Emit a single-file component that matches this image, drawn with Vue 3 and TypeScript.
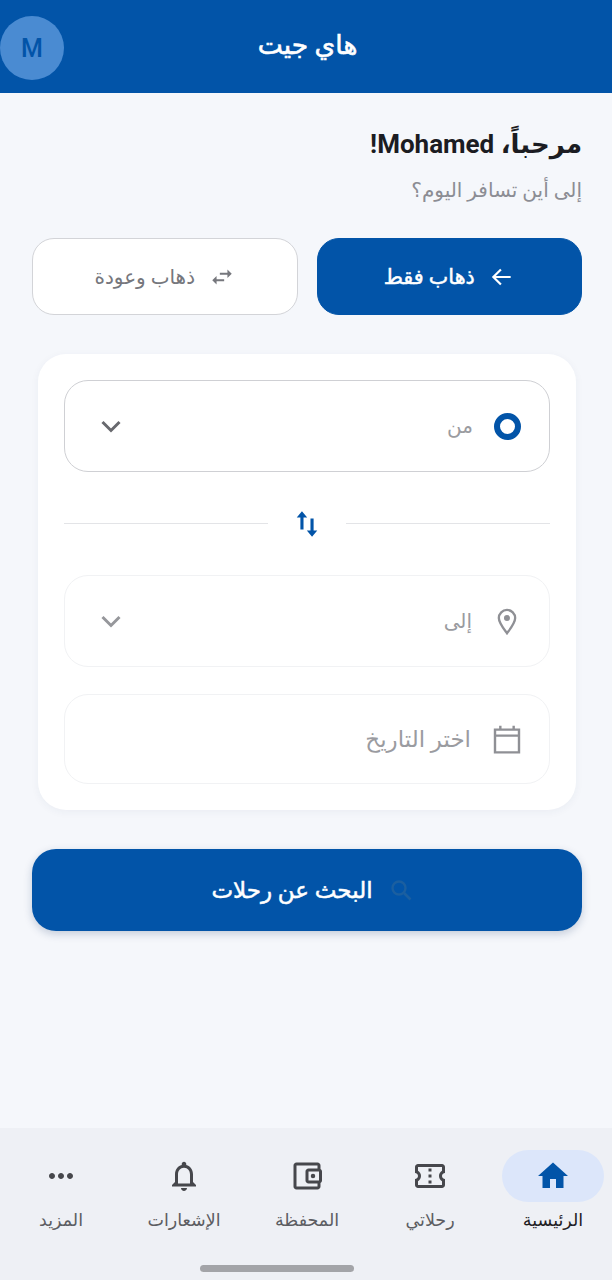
<script setup lang="ts">
interface NavItem { label: string; active?: boolean; icon: string }
const nav: NavItem[] = [
  { label: 'الرئيسية', active: true, icon: 'M10 20v-6h4v6h5v-8h3L12 3 2 12h3v8z' },
  { label: 'رحلاتي', icon: 'M22 10V6c0-1.1-.9-2-2-2H4c-1.1 0-2 .9-2 2v4c1.1 0 2 .9 2 2s-.9 2-2 2v4c0 1.1.9 2 2 2h16c1.1 0 2-.9 2-2v-4c-1.1 0-2-.9-2-2s.9-2 2-2zm-2-1.46c-1.19.69-2 1.99-2 3.46s.81 2.77 2 3.46V18H4v-2.54c1.19-.69 2-1.99 2-3.46 0-1.48-.8-2.77-2-3.46V6h16v2.54zM11 15h2v2h-2zm0-4h2v2h-2zm0-4h2v2h-2z' },
  { label: 'المحفظة', icon: 'M21 7.28V5c0-1.1-.9-2-2-2H5c-1.11 0-2 .9-2 2v14c0 1.1.89 2 2 2h14c1.1 0 2-.9 2-2v-2.28c.59-.35 1-.98 1-1.72V9c0-.74-.41-1.38-1-1.72zM20 9v6h-7V9h7zM5 19V5h14v2h-6c-1.1 0-2 .9-2 2v6c0 1.1.9 2 2 2h6v2H5z M16 13.5a1.5 1.5 0 1 0 0-3 1.5 1.5 0 0 0 0 3z' },
  { label: 'الإشعارات', icon: 'M12 22c1.1 0 2-.9 2-2h-4c0 1.1.9 2 2 2zm6-6v-5c0-3.07-1.63-5.64-4.5-6.32V4c0-.83-.67-1.5-1.5-1.5s-1.5.67-1.5 1.5v.68C7.64 5.36 6 7.92 6 11v5l-2 2v1h16v-1l-2-2zm-2 1H8v-6c0-2.48 1.51-4.5 4-4.5s4 2.02 4 4.5v6z' },
  { label: 'المزيد', icon: 'M6 10c-1.1 0-2 .9-2 2s.9 2 2 2 2-.9 2-2-.9-2-2-2zm12 0c-1.1 0-2 .9-2 2s.9 2 2 2 2-.9 2-2-.9-2-2-2zm-6 0c-1.1 0-2 .9-2 2s.9 2 2 2 2-.9 2-2-.9-2-2-2z' },
]
</script>

<template>
  <div class="page" dir="rtl">
    <header class="topbar">
      <h1 class="title">هاي جيت</h1>
      <div class="avatar">M</div>
    </header>

    <main class="content">
      <h2 class="greet">مرحباً، Mohamed!</h2>
      <p class="sub">إلى أين تسافر اليوم؟</p>

      <div class="trip">
        <button class="trip-btn on">
          <svg class="trip-icon" viewBox="0 0 24 24"><path d="M20 12H4.500M11 5l-7 7 7 7" fill="none" stroke="currentColor" stroke-width="2" /></svg>
          <span>ذهاب فقط</span>
        </button>
        <button class="trip-btn">
          <svg class="trip-icon" viewBox="0 0 24 24"><path fill="currentColor" d="M6.990 11 3 15l3.990 4v-3H14v-2H6.990v-3zM21 9l-3.990-4v3H10v2h7.010v3L21 9z" /></svg>
          <span>ذهاب وعودة</span>
        </button>
      </div>

      <section class="card">
        <div class="field first">
          <span class="ring"></span>
          <span class="ph">من</span>
          <svg class="chev" viewBox="0 0 24 24"><path d="M3.500 8l8.500 8.500L20.500 8" fill="none" stroke="currentColor" stroke-width="3" /></svg>
        </div>

        <div class="swap-row">
          <span class="line"></span>
          <svg class="swap" viewBox="0 0 24 30"><path fill="currentColor" d="M6.500 1 0.800 8h4v13h3.400V8h4zM17.500 29l5.700-7h-4V9h-3.400v13h-4z" /></svg>
          <span class="line"></span>
        </div>

        <div class="field second">
          <svg class="fic" viewBox="0 0 24 24"><path fill="none" stroke="currentColor" stroke-width="2" d="M12 22.500c-3-4-7-8.800-7-13a7 7 0 0 1 14 0c0 4.200-4 9-7 13z" /><circle cx="12" cy="9.500" r="2.600" fill="currentColor" /></svg>
          <span class="ph">إلى</span>
          <svg class="chev light" viewBox="0 0 24 24"><path d="M3.500 8l8.500 8.500L20.500 8" fill="none" stroke="currentColor" stroke-width="3" /></svg>
        </div>

        <div class="field third">
          <svg class="fic cal" viewBox="0 0 24 24"><path fill="none" stroke="currentColor" stroke-width="1.800" d="M3 5h18v17H3zM3 9.500h18M7 2v3M17 2v3" /></svg>
          <span class="ph wide">اختر التاريخ</span>
        </div>
      </section>

      <button class="search">
        <svg class="search-ic" viewBox="0 0 24 24"><circle cx="10" cy="10" r="6.500" fill="none" stroke="currentColor" stroke-width="2.400" /><path d="M15 15l6.500 6.500" stroke="currentColor" stroke-width="2.600" /></svg>
        <span>البحث عن رحلات</span>
      </button>
    </main>

    <nav class="nav">
      <div v-for="item in nav" :key="item.label" class="nav-item" :class="{ active: item.active }">
        <span class="nav-ic"><svg viewBox="0 0 24 24"><path fill="currentColor" fill-rule="evenodd" :d="item.icon" /></svg></span>
        <span class="nav-label">{{ item.label }}</span>
      </div>
      <span class="handle"></span>
    </nav>
  </div>
</template>

<style>
body { margin: 0; background: #f5f7fb; }
</style>

<style scoped>
.page {
  width: 612px;
  height: 1280px;
  display: flex;
  flex-direction: column;
  background: #f5f7fb;
  font-family: Roboto, "DejaVu Sans", sans-serif;
  overflow: hidden;
}
.topbar {
  height: 93px;
  flex: none;
  background: #0254a8;
  position: relative;
  display: flex;
  align-items: center;
  justify-content: center;
  padding-left: 3px;
  box-sizing: border-box;
}
.title {
  margin: 0 0 4px;
  color: #fff;
  font-size: 26.500px;
  font-weight: 400;
  -webkit-text-stroke: 0.6px #fff;
}
.avatar {
  position: absolute;
  left: 0;
  top: 16px;
  width: 64px;
  height: 64px;
  border-radius: 50%;
  background: #4a8bd2;
  color: #0254a8;
  font-size: 25px;
  font-weight: 500;
  display: flex;
  align-items: center;
  justify-content: center;
}
.content {
  flex: 1;
  padding: 30px 30px 0 30px;
  display: flex;
  flex-direction: column;
}
.greet {
  margin: 0;
  color: #1b1c22;
  font-size: 26px;
  line-height: 42px;
  font-weight: 700;
}
.sub {
  margin: 8px 0 0;
  color: #8c8d94;
  font-size: 20px;
  line-height: 34px;
}
.trip {
  margin-top: 31px;
  margin-left: 2px;
  display: flex;
  gap: 19px;
}
.trip-btn {
  flex: 1;
  height: 77px;
  border-radius: 22px;
  border: 1px solid #d3d4d8;
  background: #fff;
  color: #76777d;
  font: inherit;
  font-size: 20px;
  display: flex;
  align-items: center;
  justify-content: center;
  gap: 14px;
  padding: 0;
}
.trip-btn.on {
  background: #0254a8;
  border-color: #0254a8;
  color: #fff;
  font-size: 20.700px;
  -webkit-text-stroke: 0.5px #fff;
}
.trip-icon { width: 26px; height: 26px; }
.card {
  margin: 39px 6px 0 8px;
  padding: 26px;
  background: #fff;
  border-radius: 28px;
  box-shadow: 0 2px 8px rgba(40, 60, 90, 0.05);
}
.field {
  display: flex;
  align-items: center;
  box-sizing: border-box;
  border-radius: 24px;
  border: 1px solid #f1f2f4;
  padding: 0 28px 0 34px;
  color: #8f9095;
  font-size: 20px;
}
.field.first { height: 92px; border-color: #cfd0d4; }
.field.second { height: 92px; }
.field.third { height: 90px; margin-top: 27px; padding-right: 26px; }
.ph { margin-right: 21px; color: #9a9ba0; }
.ph.wide { font-size: 23px; margin-right: 20px; }
.chev { width: 24px; height: 24px; margin-right: auto; color: #68696e; }
.chev.light { color: #96979b; }
.ring {
  width: 27px;
  height: 27px;
  box-sizing: border-box;
  border-radius: 50%;
  border: 6px solid #0254a8;
}
.fic { width: 28px; height: 28px; color: #8f9095; }
.fic.cal { width: 32px; height: 32px; }
.swap-row {
  height: 103px;
  display: flex;
  align-items: center;
  justify-content: center;
  gap: 28px;
}
.line { flex: 1; height: 1px; background: #e3e4e7; }
.swap { width: 22px; height: 30px; color: #0254a8; }
.search {
  margin-top: 39px;
  margin-left: 2px;
  height: 82px;
  box-sizing: border-box;
  border: none;
  border-radius: 24px;
  background: #0254a8;
  color: #fff;
  font: inherit;
  font-size: 23px;
  -webkit-text-stroke: 0.5px #fff;
  display: flex;
  align-items: center;
  justify-content: center;
  gap: 16px;
  box-shadow: 0 3px 8px rgba(20, 50, 100, 0.22);
  padding: 0 0 0 10px;
}
.search-ic { width: 24px; height: 24px; color: #1b5fa0; -webkit-text-stroke: 0; }
.nav {
  position: relative;
  height: 152px;
  flex: none;
  box-sizing: border-box;
  background: #eef0f5;
  padding: 22px 4px 0 6px;
  display: grid;
  grid-template-columns: 110px 136px 110px 136px 110px;
  align-items: start;
}
.nav-item {
  display: flex;
  flex-direction: column;
  align-items: center;
  color: #46474c;
}
.nav-ic {
  width: 102px;
  height: 52px;
  border-radius: 26px;
  display: flex;
  align-items: center;
  justify-content: center;
}
.nav-ic svg { width: 36px; height: 36px; }
.nav-item.active .nav-ic { background: #dce6fa; color: #0254a8; }
.nav-label {
  margin-top: 5px;
  font-size: 17.500px;
  line-height: 26px;
  white-space: nowrap;
  color: #5c5d62;
}
.nav-item.active .nav-label { color: #1f2024; }
.handle {
  position: absolute;
  left: 200px;
  bottom: 8px;
  width: 154px;
  height: 7px;
  border-radius: 4px;
  background: #a3a4a8;
}
</style>
